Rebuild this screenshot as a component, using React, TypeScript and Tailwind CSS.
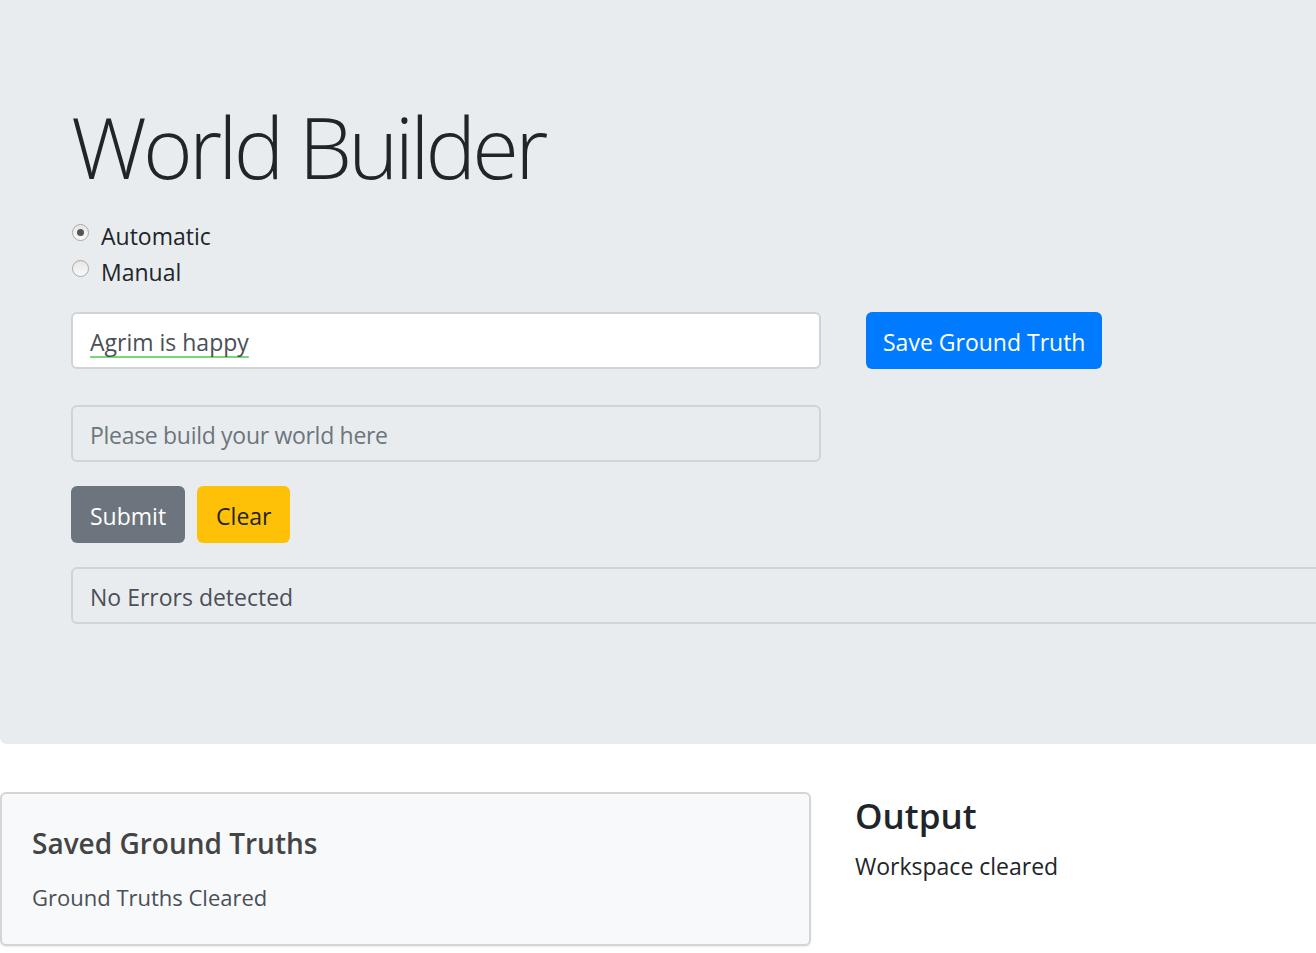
import React from "react";

const font = { fontFamily: '"Open Sans", "Noto Sans", sans-serif' };

function Radio({ label, checked }: { label: string; checked?: boolean }) {
  return (
    <label className="flex items-center h-[36px]">
      <span className="w-[17px] h-[17px] rounded-full border border-[#a9a9a9] bg-gradient-to-b from-[#e6e6e6] to-[#fafafa] flex items-center justify-center mt-[-8px]">
        {checked && <span className="w-[7px] h-[7px] rounded-full bg-[#555]" />}
      </span>
      <span className="ml-[12px] text-[23px] text-[#212529]">{label}</span>
    </label>
  );
}

export default function App() {
  return (
    <div className="w-[1316px] h-[953px] overflow-hidden bg-white" style={font}>
      <div className="w-[1400px] bg-[#e9ecef] rounded-bl-[6px] pt-[96px] pb-[120px] pl-[71px]">
        <h1 className="text-[85px] font-light leading-[100px] text-[#212529] tracking-[-3.8px]">
          World Builder
        </h1>
        <div className="mt-[22px] pl-[1px]">
          <Radio label="Automatic" checked />
          <Radio label="Manual" />
        </div>

        <div className="flex items-center mt-[22px]">
          <div className="w-[750px] h-[57px] bg-white border-2 border-[#ced4da] rounded-[6px] flex items-center px-[17px] pt-[3px]">
            <span className="text-[23px] text-[#495057] underline decoration-[#7ad67a] decoration-2 underline-offset-[5px] [text-decoration-skip-ink:none]">
              Agrim is happy
            </span>
          </div>
          <button className="ml-[45px] h-[57px] px-[17px] pt-[3px] bg-[#007bff] text-white text-[23px] rounded-[6px]">
            Save Ground Truth
          </button>
        </div>

        <div className="mt-[36px] w-[750px] h-[57px] bg-[#e9ecef] border-2 border-[#ced4da] rounded-[6px] flex items-center px-[17px] pt-[3px]">
          <span className="text-[23px] text-[#6c757d] tracking-[-0.3px]">Please build your world here</span>
        </div>

        <div className="flex gap-[12px] mt-[24px]">
          <button className="h-[57px] px-[19px] pt-[3px] bg-[#6c757d] text-white text-[23px] rounded-[6px]">
            Submit
          </button>
          <button className="h-[57px] px-[19px] pt-[3px] bg-[#ffc107] text-[#212529] text-[23px] rounded-[6px]">
            Clear
          </button>
        </div>

        <div className="mt-[24px] w-[1300px] h-[57px] bg-[#e9ecef] border-2 border-[#ced4da] rounded-[6px] flex items-center px-[17px] pt-[3px]">
          <span className="text-[23px] text-[#495057]">No Errors detected</span>
        </div>
      </div>

      <div className="flex mt-[48px]">
        <div className="w-[811px] h-[154px] bg-[#f8f9fa] border-2 border-[#d3d5d7] rounded-[6px] px-[30px] pt-[29px] shadow-[0_1px_2px_rgba(0,0,0,0.08)]">
          <h4 className="text-[28px] font-semibold text-[#444] leading-[40px]">Saved Ground Truths</h4>
          <p className="mt-[16px] text-[22px] text-[#495057] leading-[36px]">Ground Truths Cleared</p>
        </div>
        <div className="ml-[44px]">
          <h3 className="text-[35px] font-semibold text-[#212529] leading-[48px]">Output</h3>
          <p className="mt-[8px] text-[23px] text-[#212529] leading-[36px]">Workspace cleared</p>
        </div>
      </div>
    </div>
  );
}
